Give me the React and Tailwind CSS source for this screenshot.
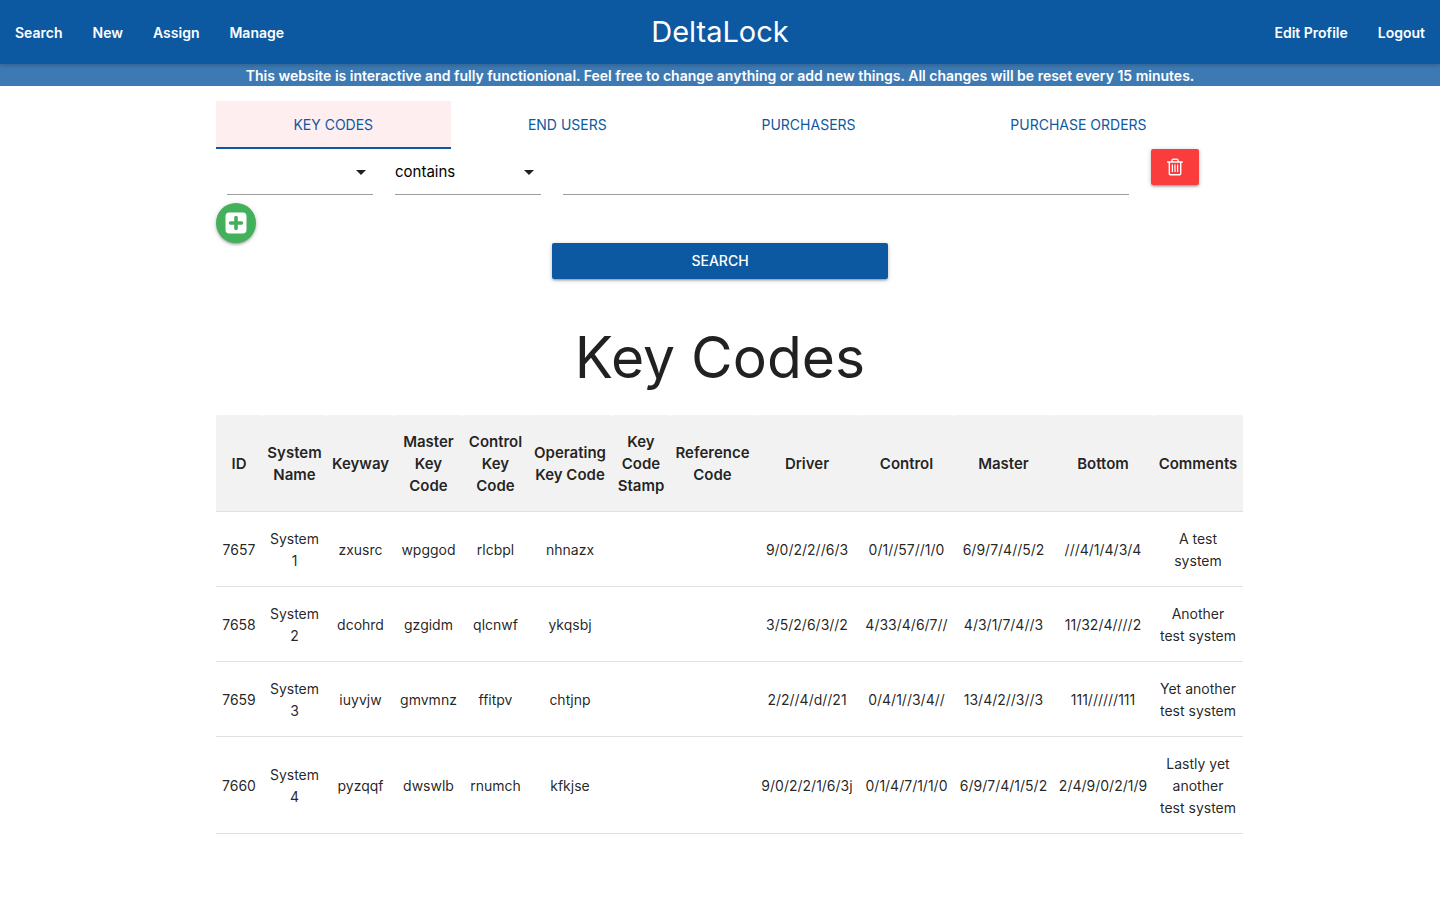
const tabs = ["Key Codes", "End Users", "Purchasers", "Purchase Orders"];

const columns = [
  ["ID", "w-[46px]"],
  ["System Name", "w-[65px]"],
  ["Keyway", "w-[67px]"],
  ["Master Key Code", "w-[69px]"],
  ["Control Key Code", "w-[65px]"],
  ["Operating Key Code", "w-[84px]"],
  ["Key Code Stamp", "w-[58px]"],
  ["Reference Code", "w-[85px]"],
  ["Driver", "w-[104px]"],
  ["Control", "w-[95px]"],
  ["Master", "w-[99px]"],
  ["Bottom", "w-[100px]"],
  ["Comments", "w-[90px]"],
];

const rows = [
  ["7657", "System 1", "zxusrc", "wpggod", "rlcbpl", "nhnazx", "", "", "9/0/2/2//6/3", "0/1//57//1/0", "6/9/7/4//5/2", "///4/1/4/3/4", "A test system"],
  ["7658", "System 2", "dcohrd", "gzgidm", "qlcnwf", "ykqsbj", "", "", "3/5/2/6/3//2", "4/33/4/6/7//", "4/3/1/7/4//3", "11/32/4////2", "Another test system"],
  ["7659", "System 3", "iuyvjw", "gmvmnz", "ffitpv", "chtjnp", "", "", "2/2//4/d//21", "0/4/1//3/4//", "13/4/2//3//3", "111//////111", "Yet another test system"],
  ["7660", "System 4", "pyzqqf", "dwswlb", "rnumch", "kfkjse", "", "", "9/0/2/2/1/6/3j", "0/1/4/7/1/1/0", "6/9/7/4/1/5/2", "2/4/9/0/2/1/9", "Lastly yet another test\u00a0system"],
];

const raised = "shadow-[0_2px_2px_0_rgba(0,0,0,0.14),0_3px_1px_-2px_rgba(0,0,0,0.12),0_1px_5px_0_rgba(0,0,0,0.2)]";

function NavLink({ children }) {
  return (
    <a href="#" className="flex h-full items-center px-[15px] pt-[2px]">
      {children}
    </a>
  );
}

function SelectField({ label, options }) {
  return (
    <div className="relative w-1/6 px-[11px]">
      <select
        aria-label={label}
        className="h-[46px] w-full appearance-none border-b border-[#9e9e9e] bg-transparent text-[15px] text-black outline-none"
      >
        {options.map((option) => (
          <option key={option}>{option}</option>
        ))}
      </select>
      <svg
        className="pointer-events-none absolute right-[11px] top-[11px] size-6"
        viewBox="0 0 24 24"
        fill="#212121"
        aria-hidden="true"
      >
        <path d="M7 10l5 5 5-5z" />
      </svg>
    </div>
  );
}

function TrashIcon() {
  return (
    <svg className="size-5" viewBox="0 0 20 20" fill="none" stroke="#fff" aria-hidden="true">
      <path
        strokeWidth="1.4"
        d="M2.2 5h15.6M4.3 5v11.7a1 1 0 0 0 1 1h9.4a1 1 0 0 0 1-1V5M7 5V3.4a1.2 1.2 0 0 1 1.2-1.2h3.6A1.2 1.2 0 0 1 13 3.4V5"
      />
      <path strokeWidth="1.2" d="M7.4 7.5V15M10 7.5V15M12.6 7.5V15" />
    </svg>
  );
}

function PlusIcon() {
  return (
    <svg className="size-6" viewBox="0 0 24 24" aria-hidden="true">
      <rect x="1.5" y="1.5" width="21" height="21" rx="3.8" fill="#fff" />
      <path d="M12 6.6v10.8M6.6 12h10.8" stroke="#43b05c" strokeWidth="3.6" strokeLinecap="round" />
    </svg>
  );
}

export default function App() {
  return (
    <div className="min-h-screen bg-white font-['Inter',sans-serif] text-[14px] leading-[22px] text-black/87">
      <nav className="relative grid h-16 grid-cols-[1fr_auto_1fr] items-center bg-[#0d59a1] font-semibold text-white shadow-[0_1px_5px_0_rgba(0,0,0,0.24)]">
        <div className="flex h-full">
          <NavLink>Search</NavLink>
          <NavLink>New</NavLink>
          <NavLink>Assign</NavLink>
          <NavLink>Manage</NavLink>
        </div>
        <a href="#" className="text-[29px] font-normal leading-[64px]">DeltaLock</a>
        <div className="flex h-full justify-end">
          <NavLink>Edit Profile</NavLink>
          <NavLink>Logout</NavLink>
        </div>
      </nav>
      <p className="bg-[#3d7ab4] pt-px text-center font-semibold leading-[21px] text-white">
        This website is interactive and fully functionional. Feel free to change anything or add new things. All changes will be reset every 15 minutes.
      </p>

      <main className="mx-auto w-[70%] pt-[15px]">
        <div className="flex h-12" role="tablist">
          {tabs.map((tab, i) => (
            <button
              key={tab}
              role="tab"
              aria-selected={i === 0}
              className={
                "grow border-b-2 px-6 pt-[2px] uppercase text-[#0d59a1] " +
                (i === 0 ? "border-[#0d59a1] bg-[#ffeeef]" : "border-transparent")
              }
            >
              {tab}
            </button>
          ))}
        </div>

        <form onSubmit={(e) => e.preventDefault()}>
          <div className="flex items-start">
            <SelectField label="Field" options={["", "ID", "System Name", "Keyway"]} />
            <SelectField label="Comparison" options={["contains", "equals"]} />
            <div className="w-7/12 px-[11px]">
              <input
                type="text"
                aria-label="Search text"
                className="h-[46px] w-full border-b border-[#9e9e9e] bg-transparent text-[15px] outline-none"
              />
            </div>
            <div className="w-1/12 px-[11px]">
              <button
                type="button"
                aria-label="Delete filter"
                className={"flex h-9 w-12 items-center justify-center rounded-[2px] bg-[#fa3c3c] " + raised}
              >
                <TrashIcon />
              </button>
            </div>
          </div>
          <button
            type="button"
            aria-label="Add filter"
            className={"mt-2 flex size-10 items-center justify-center rounded-full bg-[#43b05c] " + raised}
          >
            <PlusIcon />
          </button>
          <button
            type="submit"
            className={"mx-auto block h-9 w-1/3 rounded-[2px] bg-[#0d59a1] font-medium uppercase text-white " + raised}
          >
            Search
          </button>
        </form>

        <h1 className="mt-11 mb-[22px] text-center text-[57px] leading-[70px]">Key Codes</h1>

        <div className="-mr-[19px]">
          <table className="w-full table-fixed border-collapse text-center">
            <colgroup>
              {columns.map(([name, width]) => (
                <col key={name} className={width} />
              ))}
            </colgroup>
            <thead>
              <tr className="border-b border-[#e0e0e0] text-[15px]">
                {columns.map(([name]) => (
                  <th key={name} scope="col" className="rounded-[2px] bg-[#f2f2f2] px-[5px] pt-4 pb-[14px] font-semibold">
                    {name}
                  </th>
                ))}
              </tr>
            </thead>
            <tbody>
              {rows.map((row) => (
                <tr key={row[0]} className="border-b border-[#e0e0e0]">
                  {row.map((cell, i) => (
                    <td key={i} className="px-[5px] pt-4 pb-[14px]">
                      {cell}
                    </td>
                  ))}
                </tr>
              ))}
            </tbody>
          </table>
        </div>
      </main>
    </div>
  );
}
